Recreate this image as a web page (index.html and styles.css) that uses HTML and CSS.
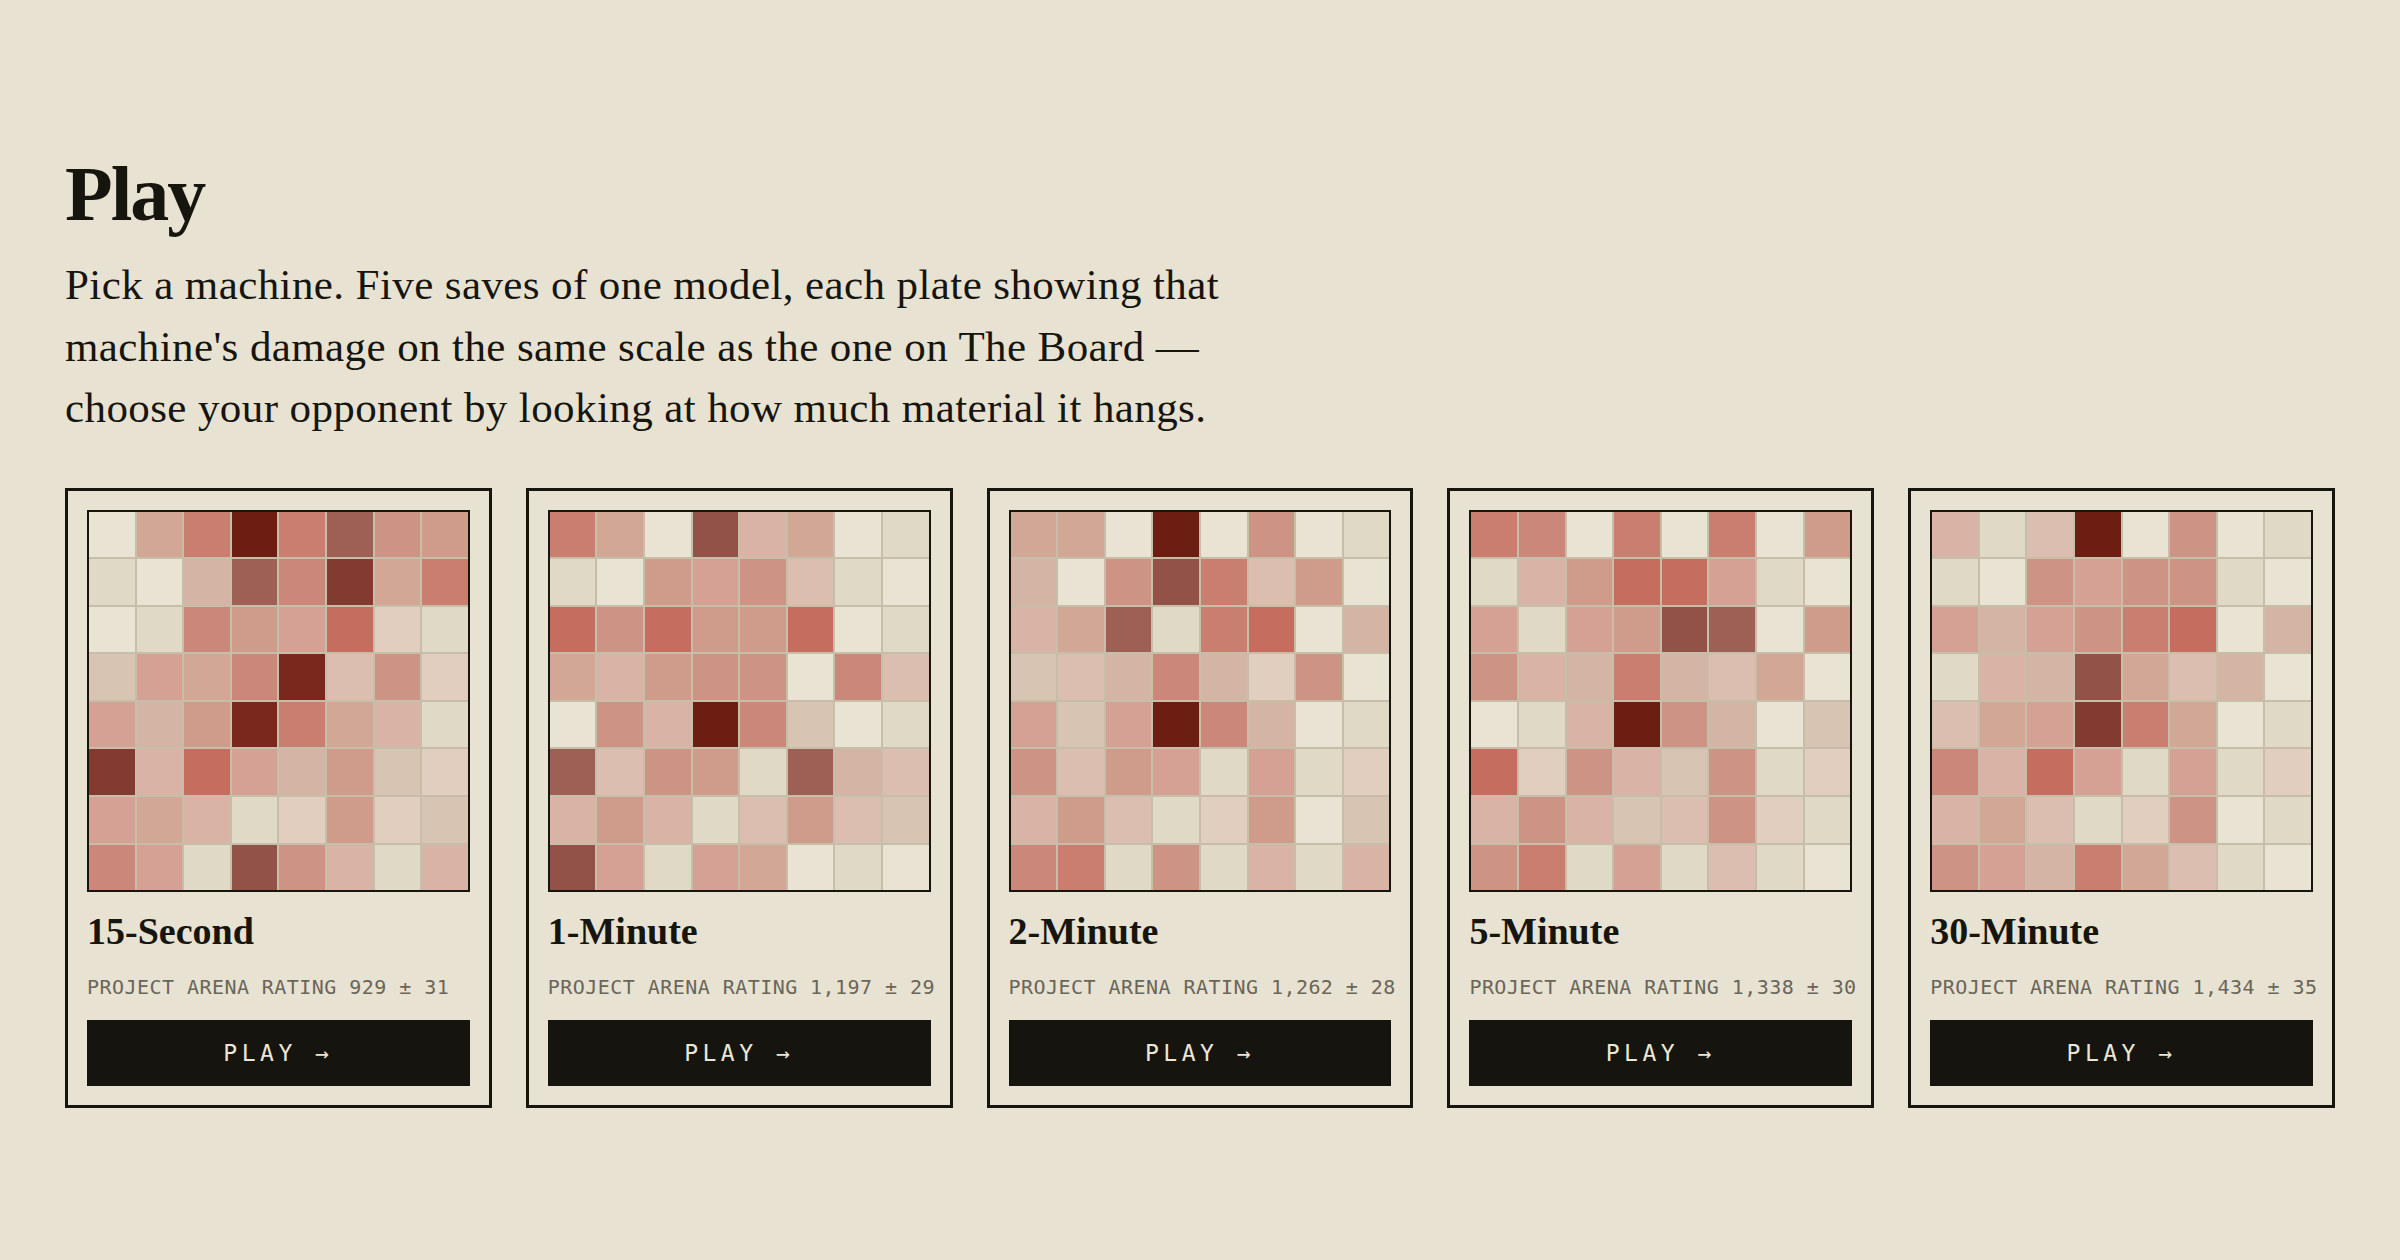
FILE: index.html
```html
<!DOCTYPE html>
<html>
<head>
<meta charset="utf-8">
<title>Play</title>
<link rel="stylesheet" href="styles.css">
</head>
<body>

<main class="page">
<h1 class="title">Play</h1>
<p class="lede">Pick a machine. Five saves of one model, each plate showing that machine's damage on the same scale as the one on The Board — choose your opponent by looking at how much material it hangs.</p>

<section class="machines">

<div class="machine">
<div class="plate" data-cells="ahmsmokj bagolqhm abljincb dihlrekc igjrmhfb qfnigjdc ihfbcjcd libpkfbf"></div>
<h2 class="machine-name">15-Second</h2>
<div class="rating">PROJECT ARENA RATING 929 ± 31</div>
<a class="play" href="#">PLAY →</a>
</div>

<div class="machine">
<div class="plate" data-cells="mhapfhab bajikeba nknjjnab hfjkkale akfsldab oekjboge fjfbejed pibihaba"></div>
<h2 class="machine-name">1-Minute</h2>
<div class="rating">PROJECT ARENA RATING 1,197 ± 29</div>
<a class="play" href="#">PLAY →</a>
</div>

<div class="machine">
<div class="plate" data-cells="hhasakab gakpmeja fhobmnag deglgcka idislgab kejibibc fjebcjad lmbkbfbf"></div>
<h2 class="machine-name">2-Minute</h2>
<div class="rating">PROJECT ARENA RATING 1,262 ± 28</div>
<a class="play" href="#">PLAY →</a>
</div>

<div class="machine">
<div class="plate" data-cells="mlamamaj bfjnniba ibijpoaj kfgmgeha abfskgad nckfdkbc fkfdekcb kmbibeba"></div>
<h2 class="machine-name">5-Minute</h2>
<div class="rating">PROJECT ARENA RATING 1,338 ± 30</div>
<a class="play" href="#">PLAY →</a>
</div>

<div class="machine">
<div class="plate" data-cells="fbesakab bakikkba igikmnag bfgphega ehiqmhab lfnibibc fhebckab kigmheba"></div>
<h2 class="machine-name">30-Minute</h2>
<div class="rating">PROJECT ARENA RATING 1,434 ± 35</div>
<a class="play" href="#">PLAY →</a>
</div>

</section>
</main>

<script>
// damage scale, lightest (untouched) to darkest (hung material)
var shades={
a:"#e9e3d3",b:"#e0d9c6",c:"#e1cebe",d:"#d8c4b3",e:"#dcbeb0",
f:"#d9b3a6",g:"#d4b4a4",h:"#d3a796",i:"#d4a194",j:"#cf9c8c",
k:"#cd9384",l:"#ca877a",m:"#c97e70",n:"#c56d5f",o:"#9e6055",
p:"#925248",q:"#833a31",r:"#7a271e",s:"#6d1e12"
};

/* fill every plate with its 8x8 squares */
var plates=document.querySelectorAll(".plate");
for(var p=0;p<plates.length;p++){
var cells=plates[p].getAttribute("data-cells").replace(/ /g,"");
for(var i=0;i<cells.length;i++){
var sq=document.createElement("div");
sq.className="square";
sq.style.backgroundColor=shades[cells[i]];
plates[p].appendChild(sq);
}
}
</script>
</body>
</html>
```

FILE: styles.css
```css
body{
margin:0;
background-color:#e8e2d3;
color:#16150e;
font-family:"Liberation Serif","Times New Roman",serif;
}

.page{padding:156px 65px 80px 65px;}

.title{
margin:0;
font-size:78px;
line-height:76px;
font-weight:bold;
letter-spacing:-2px;
}

.lede{
margin:22px 0 0 0;
max-width:1250px;
font-size:43px;
line-height:61.5px;
letter-spacing:0.4px;
}

.machines{
display:grid;
grid-template-columns:repeat(5,minmax(0,1fr));
gap:34px;
margin-top:49px;
}

.machine{
min-width:0;
border:3px solid #16150e;
padding:19px;
display:flex;
flex-direction:column;
}

.plate{
display:grid;
grid-template-columns:repeat(8,minmax(0,1fr));
gap:2px;
aspect-ratio:1;
border:2px solid #16150e;
background-color:#c7bea9;
}

.machine-name{
margin:17px 0 0 0;
font-size:38px;
line-height:44px;
font-weight:bold;
}

.rating{
margin-top:22px;
font-family:"DejaVu Sans Mono","Liberation Mono",monospace;
font-size:20px;
line-height:24px;
letter-spacing:0.45px;
color:#6a6659;
white-space:nowrap;
}

.play{
margin-top:21px;
height:66px;
display:flex;
justify-content:center;
align-items:center;
background-color:#15140e;
color:#ece6d6;
text-decoration:none;
font-family:"DejaVu Sans Mono","Liberation Mono",monospace;
font-size:23px;
letter-spacing:4.5px;
}
```
